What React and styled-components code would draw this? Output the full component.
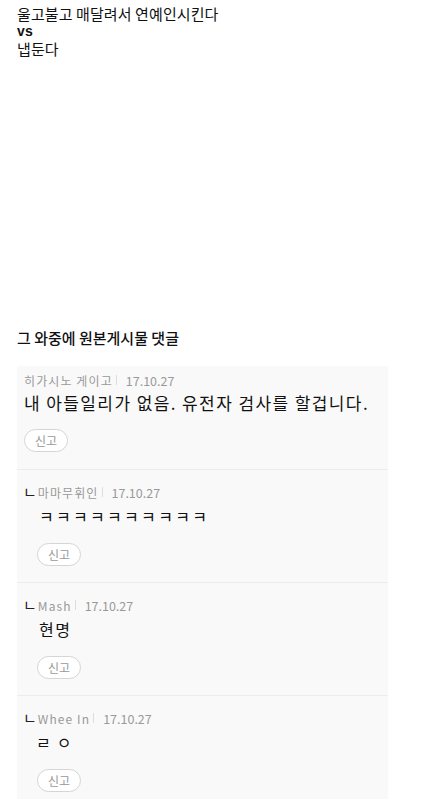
import React from "react";
import styled, { createGlobalStyle } from "styled-components";

const Global = createGlobalStyle`
  html, body { margin: 0; padding: 0; background: #fff; }
  body { font-family: "Noto Sans CJK KR", "Noto Sans", sans-serif; color: #111; }
`;

const Page = styled.div`
  padding: 5px 0 0 17px;
  width: 371px;
`;

const Intro = styled.div`
  font-size: 15px;
  line-height: 17px;
  color: #111;
  letter-spacing: 0.1px;
`;

const Vs = styled.div`
  font-family: "Liberation Sans", Arial, sans-serif;
  font-size: 14px;
  font-weight: 700;
  line-height: 18px;
`;

const Blank = styled.div`
  height: 270px;
`;

const Heading = styled.h3`
  margin: 0 0 17px;
  font-size: 15px;
  line-height: 22px;
  font-weight: 500;
  color: #111;
`;

const CommentBox = styled.ul`
  list-style: none;
  margin: 0;
  padding: 0;
  background: #f9f9f9;
`;

const Item = styled.li`
  padding: ${(p) => (p.$first ? "6px 7px 17px" : p.$last ? "14px 7px 7px" : "14px 7px 16px")};
  border-bottom: ${(p) => (p.$last ? "none" : "1px solid #ececec")};
`;

const Meta = styled.div`
  display: flex;
  align-items: center;
  height: 16px;
  font-size: 12px;
  color: #999;
`;

const ReplyMark = styled.span`
  color: #222;
  font-size: 15px;
  line-height: 16px;
  margin: 0 1px 0 -1px;
`;

const Name = styled.span`
  letter-spacing: 1.1px;
`;

const Sep = styled.span`
  width: 1px;
  height: 10px;
  background: #ddd;
  margin: 0 9px 0 3px;
`;

const Date = styled.span`
  font-size: 12.5px;
  color: #999;
`;

const Body = styled.div`
  margin: ${(p) => (p.$first ? "3px 0 0" : "4px 0 0 15px")};
  font-size: ${(p) => (p.$first ? "17px" : "16px")};
  line-height: 24px;
  color: #111;
  letter-spacing: ${(p) => p.$spacing || "0"};
  text-indent: ${(p) => p.$indent || "0"};
`;

const Report = styled.button`
  display: block;
  margin: ${(p) => (p.$first ? "14px 0 0" : "15px 0 0 13px")};
  height: 23px;
  width: 44px;
  padding: 0;
  border: 1px solid #d5d5d5;
  border-radius: 12px;
  background: #fff;
  color: #999;
  font-family: inherit;
  font-size: 12px;
  line-height: 21px;
`;

const comments = [
  { name: "히가시노 게이고", date: "17.10.27", text: "내 아들일리가 없음. 유전자 검사를 할겁니다.", spacing: "1.4px" },
  { reply: true, name: "마마무휘인", date: "17.10.27", text: "ㅋㅋㅋㅋㅋㅋㅋㅋㅋㅋ", spacing: "2.3px" },
  { reply: true, name: "Mash", date: "17.10.27", text: "현명", spacing: "1.5px" },
  { reply: true, name: "Whee In", date: "17.10.27", text: "ㄹㅇ", spacing: "6px", indent: "-3px" },
];

export default function App() {
  return (
    <>
      <Global />
      <Page>
        <Intro>
          울고불고 매달려서 연예인시킨다
          <Vs>vs</Vs>
          냅둔다
        </Intro>
        <Blank />
        <Heading>그 와중에 원본게시물 댓글</Heading>
        <CommentBox>
          {comments.map((c, i) => (
            <Item key={i} $first={i === 0} $last={i === comments.length - 1}>
              <Meta>
                {c.reply && <ReplyMark>ㄴ</ReplyMark>}
                <Name>{c.name}</Name>
                <Sep />
                <Date>{c.date}</Date>
              </Meta>
              <Body $first={i === 0} $spacing={c.spacing} $indent={c.indent}>{c.text}</Body>
              <Report $first={i === 0}>신고</Report>
            </Item>
          ))}
        </CommentBox>
      </Page>
    </>
  );
}
